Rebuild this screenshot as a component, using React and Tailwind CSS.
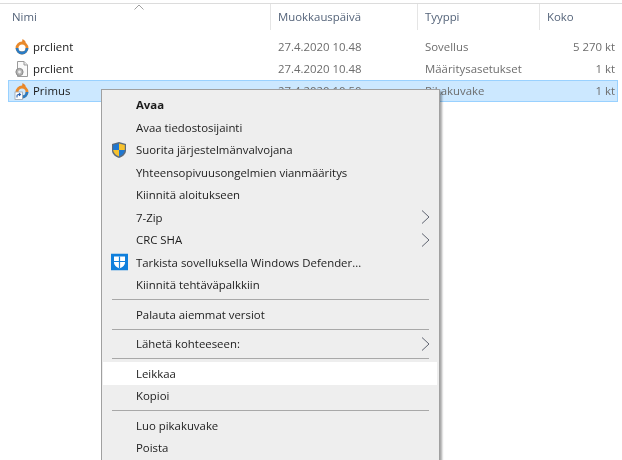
const font = { fontFamily: '"Open Sans", "Noto Sans", sans-serif' };

function OrbIcon({ shortcut }) {
  return (
    <svg width="18" height="18" viewBox="0 0 18 18" className="shrink-0">
      <path d="M9.5 1 C12.5 2.5 13 4 12.5 5.5 L9 4.5 Z" fill="#e8842a" />
      <circle cx="9" cy="10" r="5" fill="none" stroke="#e98a2c" strokeWidth="2.8" />
      <path d="M4 10 A5 5 0 0 0 14 10" fill="none" stroke="#2b7cc4" strokeWidth="2.8" />
      {shortcut && (
        <g>
          <rect x="2" y="10" width="7.5" height="7.5" fill="#fff" stroke="#9aa4b0" strokeWidth="0.8" />
          <path d="M4 15.5 L4 13.5 Q4 12.5 5.5 12.5 L7 12.5 M6 11.2 L7.5 12.5 L6 13.8" fill="none" stroke="#2760b0" strokeWidth="1.1" />
        </g>
      )}
    </svg>
  );
}

function ConfigIcon() {
  return (
    <svg width="18" height="18" viewBox="0 0 18 18" className="shrink-0">
      <path d="M4.5 1.5 H11 L14.5 5 V16.5 H4.5 Z" fill="#fafafa" stroke="#9b9b9b" />
      <path d="M11 1.5 V5 H14.5" fill="#e8e8e8" stroke="#9b9b9b" />
      <circle cx="6.5" cy="12" r="3.6" fill="#b4b4b4" stroke="#8a8a8a" />
      <circle cx="6.5" cy="12" r="1.4" fill="#f0f0f0" />
    </svg>
  );
}

function UacShield() {
  return (
    <svg width="16" height="17" viewBox="0 0 16 17">
      <path d="M8 .5 L15 2.5 V9 C15 13 11 15.5 8 16.5 C5 15.5 1 13 1 9 V2.5 Z" fill="#5d6b7c" />
      <path d="M8 2 L2.2 3.5 V8.5 H8 Z" fill="#1f77d0" />
      <path d="M8 2 L13.8 3.5 V8.5 H8 Z" fill="#f7c22e" />
      <path d="M2.2 8.5 H8 V15 C5.5 14 2.6 12 2.2 8.5 Z" fill="#f7c22e" />
      <path d="M13.8 8.5 H8 V15 C10.5 14 13.4 12 13.8 8.5 Z" fill="#1f77d0" />
    </svg>
  );
}

function DefenderIcon() {
  return (
    <svg width="17" height="17" viewBox="0 0 17 17">
      <rect width="17" height="17" fill="#0f7fdc" />
      <path d="M3 3 H14 V9 C14 12 11 14 8.5 15 C6 14 3 12 3 9 Z" fill="#fff" />
      <path d="M8.5 3 V15 M3 8 H14" stroke="#0f7fdc" strokeWidth="1.2" />
    </svg>
  );
}

function Chevron() {
  return (
    <svg width="9" height="15" viewBox="0 0 9 15" className="absolute right-[9px] top-1/2 -translate-y-1/2">
      <path d="M1 1 L8 7.5 L1 14" fill="none" stroke="#5f6470" strokeWidth="1" />
    </svg>
  );
}

function Column({ w, children, sep = true }) {
  return (
    <div className={`${w} h-[26px] flex items-center pl-[7px] ${sep ? "border-r border-[#e5e5e5]" : ""} text-[#55647a]`}>
      {children}
    </div>
  );
}

function Row({ icon, name, date, type, size, selected }) {
  return (
    <div className={`h-[22px] ml-[8px] w-[610px] flex items-center border ${selected ? "bg-[#cce8ff] border-[#99d1ff]" : "border-transparent"}`}>
      <div className="w-[263px] flex items-center pl-[4px] gap-[2px] text-[#1a1a1a]">
        {icon}
        <span>{name}</span>
      </div>
      <div className="w-[147px] pl-[6px] text-[#6d6d6d]">{date}</div>
      <div className="w-[108px] pl-[6px] text-[#6d6d6d] whitespace-nowrap">{type}</div>
      <div className="flex-1 text-right pr-[2px] text-[#6d6d6d]">{size}</div>
    </div>
  );
}

function Item({ label, icon, bold, arrow, hover }) {
  return (
    <div className={`relative h-[22.5px] flex items-center text-[#1c1c1c] ${bold ? "font-bold" : ""} ${hover ? "bg-white ml-px mr-[2px] pl-[33px]" : "pl-[34px]"}`}>
      {icon && <span className="absolute left-[9px] top-1/2 -translate-y-1/2 flex">{icon}</span>}
      <span className="whitespace-nowrap">{label}</span>
      {arrow && <Chevron />}
    </div>
  );
}

function Sep() {
  return <div className="h-px bg-[#a8a8a8] ml-[10px] mr-[10px] my-[3px]" />;
}

export default function App() {
  return (
    <div className="relative w-[622px] h-[460px] overflow-hidden bg-white text-[11.4px] pt-[3px] blur-[0.35px]" style={font}>
      <div className="border-t border-[#dcdcdc] flex h-[27px]">
        <Column w="w-[271px]"><span className="pl-[5px]">Nimi</span></Column>
        <Column w="w-[147px]">Muokkauspäivä</Column>
        <Column w="w-[122px]">Tyyppi</Column>
        <Column w="w-[82px]" sep={false}>Koko</Column>
      </div>
      <svg width="10" height="6" viewBox="0 0 10 6" className="absolute left-[134px] top-[4px]">
        <path d="M.5 5.5 L5 1 L9.5 5.5" fill="none" stroke="#a0a0a0" />
      </svg>
      <div className="mt-[6px] flex flex-col">
        <Row icon={<OrbIcon />} name="prclient" date="27.4.2020 10.48" type="Sovellus" size="5 270 kt" />
        <Row icon={<ConfigIcon />} name="prclient" date="27.4.2020 10.48" type="Määritysasetukset" size="1 kt" />
        <Row icon={<OrbIcon shortcut />} name="Primus" date="27.4.2020 10.50" type="Pikakuvake" size="1 kt" selected />
      </div>

      <div className="absolute left-[101px] top-[89px] w-[339px] h-[380px] bg-[#eeeeee] border border-[#a0a0a0] shadow-[2px_2px_2px_rgba(0,0,0,0.35)] pt-[3.5px]">
        <Item label="Avaa" bold />
        <Item label="Avaa tiedostosijainti" />
        <Item label="Suorita järjestelmänvalvojana" icon={<UacShield />} />
        <Item label="Yhteensopivuusongelmien vianmääritys" />
        <Item label="Kiinnitä aloitukseen" />
        <Item label="7-Zip" arrow />
        <Item label="CRC SHA" arrow />
        <Item label="Tarkista sovelluksella Windows Defender..." icon={<DefenderIcon />} />
        <Item label="Kiinnitä tehtäväpalkkiin" />
        <Sep />
        <Item label="Palauta aiemmat versiot" />
        <Sep />
        <Item label="Lähetä kohteeseen:" arrow />
        <Sep />
        <Item label="Leikkaa" hover />
        <Item label="Kopioi" />
        <Sep />
        <Item label="Luo pikakuvake" />
        <Item label="Poista" />
      </div>
    </div>
  );
}
